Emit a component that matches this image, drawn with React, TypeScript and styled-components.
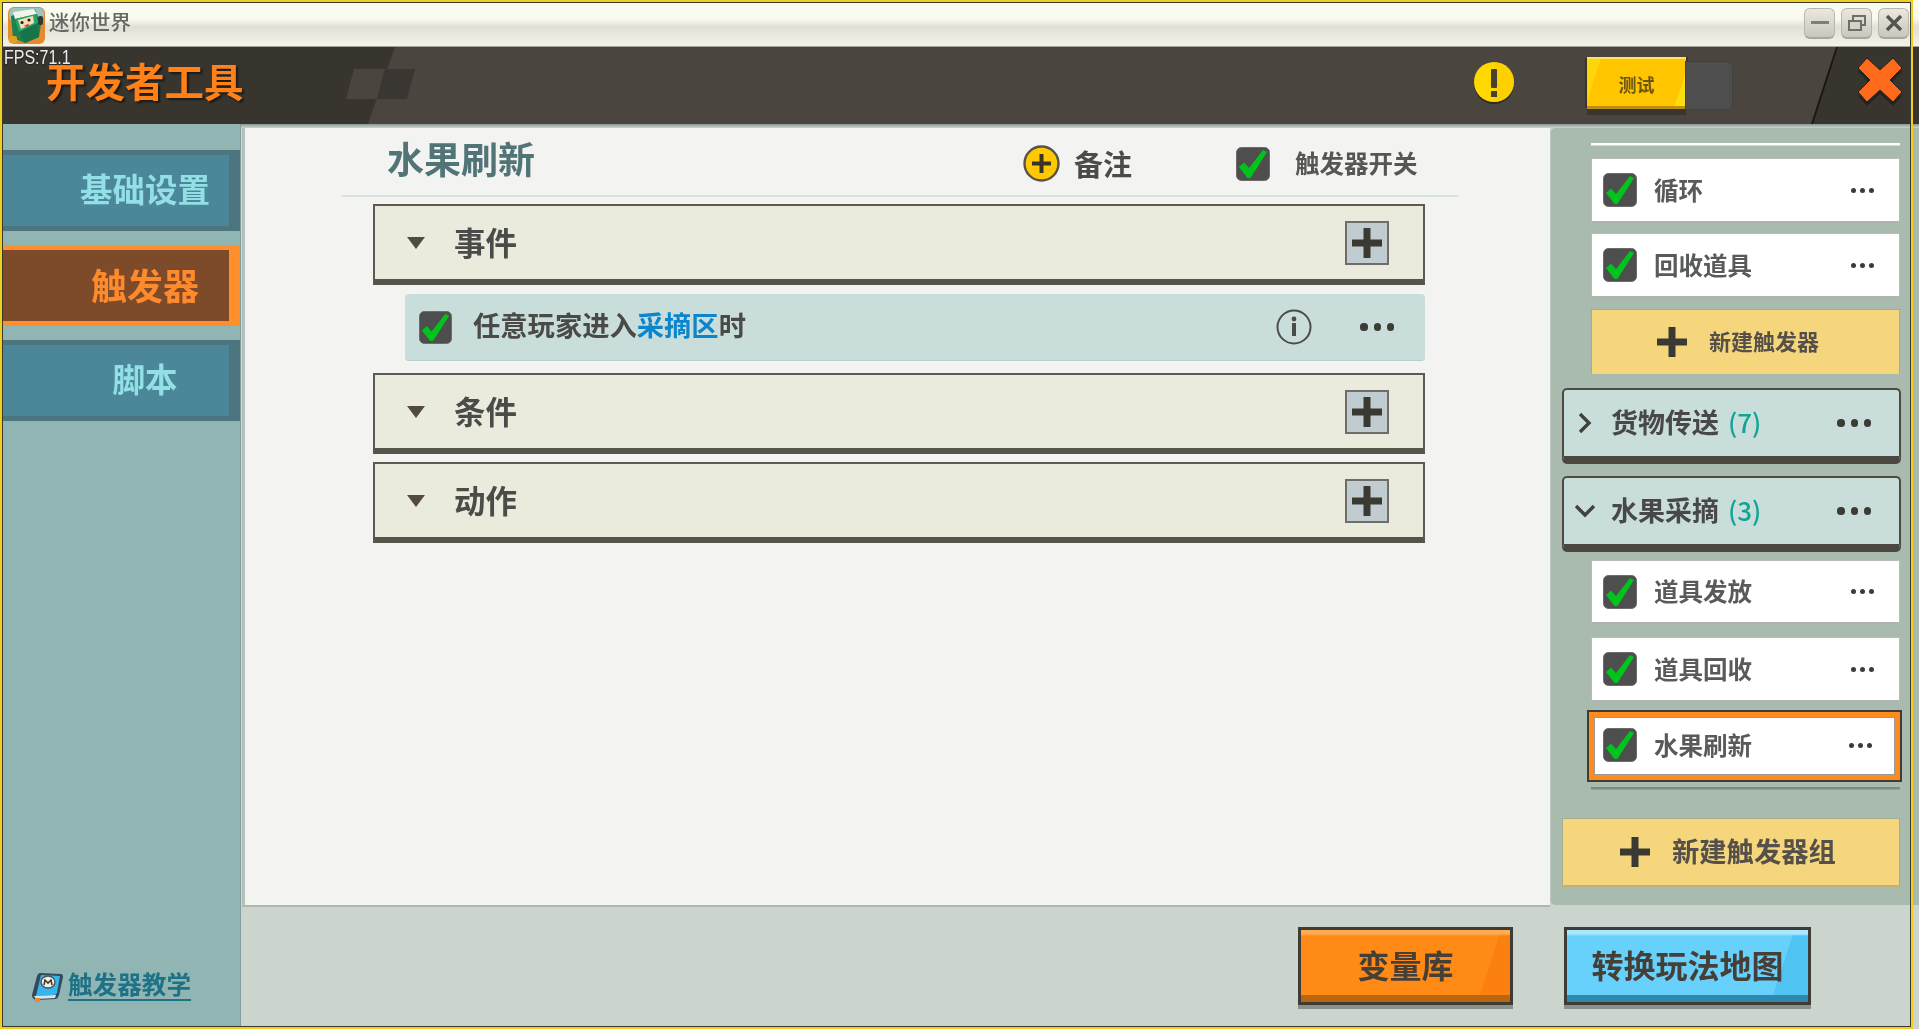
import React from "react";
import styled, { createGlobalStyle } from "styled-components";

const CJK = `"Noto Sans CJK SC", "Noto Sans", sans-serif`;

const Global = createGlobalStyle`
  html, body { margin: 0; padding: 0; background: #cbd5cd; }
  body { font-family: ${CJK}; overflow: hidden; }
  * { box-sizing: border-box; }
`;

const Screen = styled.div`
  position: relative;
  width: 1919px;
  height: 1029px;
  overflow: hidden;
  display: flex;
  flex-direction: column;
  background: #cbd5cd;
  filter: blur(0.4px);
`;

const WindowFrame = styled.div`
  position: absolute;
  left: 0;
  top: 0;
  width: 1913px;
  height: 1029px;
  border: solid #f0d01e;
  border-width: 3px 2px 3px 2px;
  outline: 1px solid #3c3a30;
  outline-offset: -3px;
  pointer-events: none;
  z-index: 5;
`;

const TitleBar = styled.div`
  height: 47px;
  flex: none;
  padding: 3px 10px 0 8px;
  display: flex;
  align-items: center;
  background: linear-gradient(180deg, #fbfcf0 0, #f9f9ed 19px, #e2dfd3 27px, #ebe9de 36px, #f4f3e8 46px, #55524a 47px);
`;

const TitleText = styled.span`
  margin: 0 0 7px 4px;
  font-size: 20.5px;
  line-height: 1;
  color: #666865;
  font-weight: 500;
`;

const WindowButtons = styled.div`
  margin-left: auto;
  display: flex;
  gap: 6px;
  margin-top: -4px;
`;

const WindowButton = styled.div`
  width: 31px;
  height: 31px;
  border-radius: 6px;
  border: 1px solid #b9b6aa;
  border-bottom: 2px solid #a9a69b;
  background: linear-gradient(180deg, #ebe9df, #c9c7bc);
  display: flex;
  align-items: center;
  justify-content: center;
`;

const Header = styled.div`
  position: relative;
  height: 77px;
  flex: none;
  display: flex;
  align-items: center;
  padding: 0 16px 5px 46px;
  background: #38352f;
  overflow: hidden;
  &::before {
    content: "";
    position: absolute;
    inset: 0;
    background: #4a463f;
    clip-path: polygon(395px 0, 1837px 0, 1812px 100%, 368px 100%);
  }
  &::after {
    content: "";
    position: absolute;
    inset: 0;
    background: #191814;
    clip-path: polygon(1836px 0, 1838px 0, 1813px 100%, 1811px 100%);
  }
`;

const Fps = styled.span`
  position: absolute;
  left: 4px;
  top: 0;
  z-index: 2;
  font-family: "Liberation Sans", sans-serif;
  font-size: 20px;
  line-height: 20px;
  color: #ececec;
  text-shadow: 0 1px 1px #222;
  transform: scaleX(0.8);
  transform-origin: left center;
`;

const HeaderTitle = styled.h1`
  position: relative;
  margin: 0 0 6px;
  font-size: 39.5px;
  line-height: 1;
  font-weight: 700;
  color: #ff8118;
  text-shadow: 2px 2px 2px #1c1a16;
`;

const Checker = styled.svg`
  position: absolute;
  left: 344px;
  top: 22px;
`;

const HeaderIcon = styled.svg`
  position: relative;
  flex: none;
  display: block;
`;

const WarnSlot = styled.div`
  position: relative;
  margin-left: auto;
`;

const TestGroup = styled.div`
  position: relative;
  display: flex;
  margin-left: 72px;
`;

const TestButton = styled.div`
  width: 99px;
  height: 52px;
  padding-top: 2px;
  display: flex;
  align-items: center;
  justify-content: center;
  font-size: 18px;
  font-weight: 700;
  color: #6d5610;
  border-top: 2px solid #ffe45a;
  border-bottom: 3px solid #c08d10;
  background: linear-gradient(108deg, #ffd60a 0, #ffd60a 12%, #ffc600 12%, #ffc600 90%, #ffdc10 90%);
  box-shadow: 0 6px 0 #38352f, -3px 0 0 -1px #38352f, 2px 0 0 0 #38352f;
`;

const ToggleTrack = styled.div`
  width: 46px;
  height: 47px;
  margin-top: 5px;
  background: #4e4e4e;
  border-radius: 0 5px 5px 0;
  box-shadow: 0 0 0 1px #42403a;
`;

const CloseSlot = styled.div`
  position: relative;
  margin-left: 125px;
`;

const Body = styled.div`
  flex: 1;
  min-height: 0;
  display: flex;
`;

const Sidebar = styled.nav`
  width: 241px;
  flex: none;
  padding: 26px 0 0 3px;
  display: flex;
  flex-direction: column;
  gap: 14px;
  background: #91b5b3;
  border-right: 1px solid #7fa09f;
`;

const Tab = styled.div<{ $active?: boolean }>`
  height: 81px;
  padding: 0 0 ${(p) => (p.$active ? 3 : 4)}px 58px;
  display: flex;
  align-items: center;
  justify-content: center;
  font-size: ${(p) => (p.$active ? 36 : 32.5)}px;
  line-height: 1;
  font-weight: 700;
  color: ${(p) => (p.$active ? "#ff8a2c" : "#92dfe6")};
  background: ${(p) => (p.$active ? "#7d4a2a" : "#4c8699")};
  border: solid ${(p) => (p.$active ? "#ff8f2d" : "#4d7580")};
  border-width: 5px 11px 5px 0;
`;

const HelpLink = styled.a`
  margin-top: auto;
  margin-bottom: 26px;
  margin-left: 28px;
  display: flex;
  align-items: flex-start;
  gap: 4px;
  font-size: 24.6px;
  font-weight: 700;
  line-height: 28px;
  color: #1e7287;
`;

const HelpText = styled.span`
  border-bottom: 2px solid #1e7287;
  margin-top: -3px;
  padding-bottom: 2px;
`;

const MainColumn = styled.div`
  flex: 1;
  min-width: 0;
  display: flex;
  flex-direction: column;
  padding-top: 4px;
  background: linear-gradient(180deg, #8b9893 0, #cbd5cd 4px);
`;

const Workspace = styled.div`
  display: flex;
  height: 778px;
  flex: none;
`;

const Editor = styled.section`
  width: 1308px;
  flex: none;
  height: 779px;
  padding: 0 92px 0 97px;
  background: #f3f3f1;
  border-left: 3px solid #b5c0b8;
  border-bottom: 2px solid #b2b5af;
  margin-left: 1px;
`;

const EditorHead = styled.header`
  height: 69px;
  padding: 4px 0 0 45px;
  display: flex;
  align-items: center;
  border-bottom: 2px solid #d4e4dc;
`;

const EditorTitle = styled.h2`
  margin: 0 0 11px;
  font-size: 37px;
  line-height: 1;
  font-weight: 700;
  color: #517477;
`;

const NoteAction = styled.div`
  margin-left: 488px;
  display: flex;
  align-items: center;
  gap: 14px;
  font-size: 29px;
  line-height: 1;
  font-weight: 700;
  color: #4b4b49;
`;

const SwitchAction = styled.div`
  margin-left: 104px;
  display: flex;
  align-items: center;
  gap: 25px;
  font-size: 24.5px;
  line-height: 1;
  font-weight: 700;
  color: #565654;
`;

const Sections = styled.div`
  margin: 7px 0 0 31px;
  width: 1052px;
  display: flex;
  flex-direction: column;
`;

const SectionRow = styled.div<{ $top?: number }>`
  height: 81px;
  margin-top: ${(p) => p.$top ?? 0}px;
  padding: 0 34px 0 32px;
  display: flex;
  align-items: center;
  background: #ebebdd;
  border: 2px solid #5e5a52;
  border-bottom: 6px solid #57544c;
  font-size: 31.5px;
  line-height: 1;
  font-weight: 700;
  color: #4b4b49;
`;

const SectionLabel = styled.span`
  margin-bottom: 2px;
`;

const Caret = styled.i`
  width: 0;
  height: 0;
  border-left: 9px solid transparent;
  border-right: 9px solid transparent;
  border-top: 12px solid #544b3f;
  margin-right: 29px;
  margin-top: 1px;
`;

const PlusBox = styled.div`
  margin-left: auto;
  width: 44px;
  height: 44px;
  display: flex;
  align-items: center;
  justify-content: center;
  background: #c1ccd0;
  border: 2px solid #6d6d6a;
`;

const EventRow = styled.div`
  margin: 9px 0 12px 32px;
  height: 67px;
  padding: 0 31px 0 14px;
  display: flex;
  align-items: center;
  background: #c9dedb;
  border-radius: 4px;
  border-bottom: 1px solid #b9cfcc;
`;

const EventText = styled.span`
  margin: 0 0 4px 21px;
  font-size: 27.3px;
  line-height: 1;
  font-weight: 700;
  color: #4a4a48;
`;

const Link = styled.span`
  color: #0b86cc;
`;

const InfoSlot = styled.div`
  margin-left: auto;
  margin-right: 48px;
  display: flex;
`;

const Dots = styled.div<{ $r: number; $gap: number }>`
  display: flex;
  gap: ${(p) => p.$gap}px;
  flex: none;
  & > i {
    width: ${(p) => p.$r * 2}px;
    height: ${(p) => p.$r * 2}px;
    border-radius: 50%;
    background: #3d3b36;
  }
`;

const RightPanel = styled.aside`
  flex: 1;
  height: 777px;
  padding: 15px 0 0 0;
  background: #a9bbaf;
  border-radius: 5px 0 0 5px;
  border-left: 1px solid #bdcac0;
  display: flex;
  flex-direction: column;
`;

const EdgeLine = styled.div<{ $top?: number; $shade?: boolean }>`
  margin: ${(p) => p.$top ?? 0}px 0 0 40px;
  width: 309px;
  height: 3px;
  background: ${(p) => (p.$shade ? "#7e8d84" : "#fff")};
  border-bottom: 1px solid ${(p) => (p.$shade ? "#93a298" : "#d5d8d3")};
`;

const Card = styled.div<{ $top: number; $h: number }>`
  margin: ${(p) => p.$top}px 0 0 40px;
  width: 309px;
  height: ${(p) => p.$h}px;
  padding: 0 25px 0 11px;
  display: flex;
  align-items: center;
  background: #fff;
  border: 1px solid #b9bdb8;
  border-bottom: 2px solid #b0b4af;
  font-size: 24.5px;
  line-height: 1;
  font-weight: 700;
  color: #595b5a;
`;

const SelectedCard = styled.div<{ $top: number }>`
  margin: ${(p) => p.$top}px 0 0 36px;
  width: 315px;
  height: 72px;
  padding: 0 28px 2px 14px;
  display: flex;
  align-items: center;
  background: #fff;
  border: 2px solid #3f3c36;
  box-shadow: inset 0 0 0 5px #ff8a1e, inset 0 0 0 6px #9a9a96;
  font-size: 24.5px;
  line-height: 1;
  font-weight: 700;
  color: #595b5a;
`;

const CardLabel = styled.span`
  margin-left: 17px;
  margin-right: auto;
`;

const AddButton = styled.div<{ $top: number; $x: number; $w: number; $h: number; $size: number; $gap: number; $flat?: boolean }>`
  margin: ${(p) => p.$top}px 0 0 ${(p) => p.$x}px;
  width: ${(p) => p.$w}px;
  height: ${(p) => p.$h}px;
  padding-left: ${(p) => (p.$flat ? 57 : 65)}px;
  display: flex;
  align-items: center;
  gap: ${(p) => p.$gap}px;
  background: #f5d67c;
  border: 1px solid #a3ad8f;
  border-bottom: ${(p) => (p.$flat ? "2px solid #c0b079" : "none")};
  font-size: ${(p) => p.$size}px;
  line-height: 1;
  font-weight: 700;
  color: #55504a;
`;

const AddLabel = styled.span<{ $lift: number }>`
  margin-bottom: ${(p) => p.$lift}px;
`;

const Group = styled.div<{ $top: number }>`
  margin: ${(p) => p.$top}px 0 0 11px;
  width: 339px;
  height: 76px;
  padding: 0 28px 0 13px;
  display: flex;
  align-items: center;
  background: #c9dedb;
  border: 2px solid #4e4b44;
  border-bottom: 8px solid #4a4740;
  border-radius: 5px;
  font-size: 27px;
  line-height: 1;
  font-weight: 700;
  color: #48484a;
`;

const GroupLabel = styled.span`
  margin: 0 auto 3px 18px;
`;

const Count = styled.span`
  font-weight: 500;
  font-size: 26px;
  margin-left: 9px;
  color: #12a595;
`;

const BottomBar = styled.div`
  flex: 1;
  display: flex;
  padding: 21px 0 0 1057px;
  gap: 51px;
`;

const BigButton = styled.div<{ $w: number; $base: string; $edge: string; $side: string; $hi: string }>`
  width: ${(p) => p.$w}px;
  height: 78px;
  padding-bottom: 4px;
  display: flex;
  align-items: center;
  justify-content: center;
  font-size: 32px;
  line-height: 1;
  font-weight: 700;
  color: #463f38;
  background:
    linear-gradient(180deg, ${(p) => p.$hi} 0, ${(p) => p.$hi} 4px, transparent 6px),
    linear-gradient(0deg, ${(p) => p.$edge} 0, ${(p) => p.$edge} 7px, transparent 7px),
    linear-gradient(108deg, ${(p) => p.$base} 86%, ${(p) => p.$side} 86%);
  border: 3px solid #3f3c36;
  box-shadow: 0 4px 0 #8b908a;
`;

const Check = ({ size = 34 }: { size?: number }) => (
  <svg width={size} height={size} viewBox="0 0 34 34" style={{ flex: "none", display: "block" }}>
    <rect x="0.5" y="0.5" width="33" height="33" rx="5" fill="#4e4e4e" stroke="#6b6b69" />
    <path d="M3 20 L8 15.5 L13 21 L27 3 L31 5 L14.5 31 L11.5 31 Z" fill="#00c41c" />
  </svg>
);

const Plus = ({ size = 30, thick = 7, color = "#3a3a32" }: { size?: number; thick?: number; color?: string }) => {
  const a = (size - thick) / 2;
  return (
    <svg width={size} height={size} viewBox={`0 0 ${size} ${size}`} style={{ flex: "none", display: "block" }}>
      <rect x={a} y="0" width={thick} height={size} fill={color} />
      <rect x="0" y={a} width={size} height={thick} fill={color} />
    </svg>
  );
};

const ThreeDots = ({ r = 2.5, gap = 4 }: { r?: number; gap?: number }) => (
  <Dots $r={r} $gap={gap}>
    <i />
    <i />
    <i />
  </Dots>
);

const GameIcon = () => (
  <svg width="37" height="37" viewBox="0 0 37 37" style={{ flex: "none", display: "block" }}>
    <rect width="37" height="37" rx="6" fill="#e58a2a" />
    <rect x="1" y="1" width="35" height="13" rx="5" fill="#9cc4c4" />
    <path d="M3 9 L27 2 L33 17 L31 30 L17 36 L5 31 Z" fill="#1f7f50" />
    <path d="M5 5 L26 2 L29 7 L7 12 Z" fill="#f2f2e6" />
    <path d="M7 12 L28 7 L30 16 L11 25 Z" fill="#27a866" />
    <path d="M10 13 L25 9 L26 16 L13 22 Z" fill="#f8dcb8" />
    <circle cx="14" cy="15.5" r="1.6" fill="#222" />
    <circle cx="21" cy="13" r="1.6" fill="#222" />
    <path d="M15.5 19 L21 16.5 L20 20 Z" fill="#d04030" />
    <path d="M11 25 L30 16 L31 30 L17 36 Z" fill="#17744a" />
    <rect x="30" y="9" width="5" height="9" rx="2" fill="#2c3a38" />
    <rect x="1" y="29" width="8" height="7" rx="2" fill="#e0a020" />
  </svg>
);

const BookIcon = () => (
  <svg width="33" height="31" viewBox="0 0 33 31" style={{ flex: "none", display: "block" }}>
    <path d="M9 1 L30 2 Q32 2 32 5 L28 23 Q27 26 25 27 L5 28 Q1 27 1 23 L6 4 Q7 1 9 1 Z" fill="#35495c" />
    <path d="M10 3 L29 4 L26 21 Q25 23 23 23 L5 24 Z" fill="#36b4ee" />
    <path d="M3 24 L25 23 L24 26 L5 27 Z" fill="#d7e6ee" />
    <ellipse cx="17" cy="10" rx="7" ry="6" fill="#f0f0ea" stroke="#54504a" strokeWidth="1.4" />
    <path d="M13 13 L14 8 L17 11 L20 8 L21 13" fill="none" stroke="#403c38" strokeWidth="1.6" />
    <rect x="4" y="26" width="5" height="4" fill="#f08a20" />
  </svg>
);

export default function App() {
  return (
    <Screen>
      <Global />
      <TitleBar>
        <GameIcon />
        <TitleText>迷你世界</TitleText>
        <WindowButtons>
          <WindowButton>
            <svg width="20" height="6" viewBox="0 0 20 6">
              <rect x="1" y="1" width="18" height="3" fill="#807e76" />
            </svg>
          </WindowButton>
          <WindowButton>
            <svg width="20" height="18" viewBox="0 0 20 18" fill="none" stroke="#6f6e68" strokeWidth="2">
              <rect x="6" y="2" width="12" height="9" />
              <rect x="2" y="7" width="12" height="9" fill="#d5d3c8" />
            </svg>
          </WindowButton>
          <WindowButton>
            <svg width="18" height="18" viewBox="0 0 18 18" stroke="#55544e" strokeWidth="3.4">
              <path d="M2 2 L16 16 M16 2 L2 16" />
            </svg>
          </WindowButton>
        </WindowButtons>
      </TitleBar>

      <Header>
        <Fps>FPS:71.1</Fps>
        <Checker width="72" height="31" viewBox="0 0 72 31">
          <path d="M10 0 H41 L33 30 H2 Z" fill="#4a463f" />
          <path d="M41 0 H71 L63 30 H33 Z" fill="#3a3732" />
        </Checker>
        <HeaderTitle>开发者工具</HeaderTitle>
        <WarnSlot>
          <HeaderIcon width="42" height="44" viewBox="0 0 42 44">
            <circle cx="21" cy="23" r="20" fill="#2e2c27" />
            <circle cx="21" cy="21" r="20" fill="#ffd800" />
            <path d="M21 1 A20 20 0 0 1 41 21 A20 20 0 0 1 21 41 Z" fill="#fbc800" opacity="0.5" />
            <rect x="18" y="8" width="6" height="19" rx="1" fill="#4a4030" />
            <rect x="18" y="30" width="6" height="6" fill="#4a4030" />
          </HeaderIcon>
        </WarnSlot>
        <TestGroup>
          <TestButton>测试</TestButton>
          <ToggleTrack />
        </TestGroup>
        <CloseSlot>
          <HeaderIcon width="46" height="56" viewBox="0 0 46 56">
            <path d="M10 4 L23 16 L36 4 L45 14 L33 26 L45 38 L36 48 L23 36 L10 48 L1 38 L13 26 L1 14 Z" fill="#26241f" transform="translate(0 3)" />
            <path d="M10 3 L23 15 L36 3 L45 13 L33 25 L45 37 L36 47 L23 35 L10 47 L1 37 L13 25 L1 13 Z" fill="#ff6a1c" stroke="#26241f" strokeWidth="1" />
          </HeaderIcon>
        </CloseSlot>
      </Header>

      <Body>
        <Sidebar>
          <Tab>基础设置</Tab>
          <Tab $active>触发器</Tab>
          <Tab>脚本</Tab>
          <HelpLink>
            <BookIcon />
            <HelpText>触发器教学</HelpText>
          </HelpLink>
        </Sidebar>

        <MainColumn>
          <Workspace>
            <Editor>
              <EditorHead>
                <EditorTitle>水果刷新</EditorTitle>
                <NoteAction>
                  <svg width="37" height="37" viewBox="0 0 37 37">
                    <circle cx="18.5" cy="18.5" r="17" fill="#ffc800" stroke="#55534c" strokeWidth="2.4" />
                    <rect x="16.5" y="9" width="4" height="19" fill="#3a3426" />
                    <rect x="9" y="16.5" width="19" height="4" fill="#3a3426" />
                  </svg>
                  备注
                </NoteAction>
                <SwitchAction>
                  <Check />
                  触发器开关
                </SwitchAction>
              </EditorHead>
              <Sections>
                <SectionRow>
                  <Caret />
                  <SectionLabel>事件</SectionLabel>
                  <PlusBox>
                    <Plus />
                  </PlusBox>
                </SectionRow>
                <EventRow>
                  <Check size={33} />
                  <EventText>
                    任意玩家进入<Link>采摘区</Link>时
                  </EventText>
                  <InfoSlot>
                    <svg width="36" height="36" viewBox="0 0 36 36">
                      <circle cx="18" cy="18" r="16.5" fill="none" stroke="#4a4c48" strokeWidth="2" />
                      <circle cx="18" cy="10" r="2.4" fill="#4a4c48" />
                      <rect x="16" y="14" width="4" height="13" fill="#4a4c48" />
                    </svg>
                  </InfoSlot>
                  <ThreeDots r={3.6} gap={6} />
                </EventRow>
                <SectionRow>
                  <Caret />
                  <SectionLabel>条件</SectionLabel>
                  <PlusBox>
                    <Plus />
                  </PlusBox>
                </SectionRow>
                <SectionRow $top={8}>
                  <Caret />
                  <SectionLabel>动作</SectionLabel>
                  <PlusBox>
                    <Plus />
                  </PlusBox>
                </SectionRow>
              </Sections>
            </Editor>

            <RightPanel>
              <EdgeLine />
              <Card $top={12} $h={65}>
                <Check />
                <CardLabel>循环</CardLabel>
                <ThreeDots />
              </Card>
              <Card $top={10} $h={65}>
                <Check />
                <CardLabel>回收道具</CardLabel>
                <ThreeDots />
              </Card>
              <AddButton $top={11} $x={40} $w={309} $h={65} $size={22} $gap={22}>
                <Plus />
                <AddLabel $lift={4}>新建触发器</AddLabel>
              </AddButton>
              <Group $top={14}>
                <svg width="16" height="24" viewBox="0 0 16 24" fill="none" stroke="#42423c" strokeWidth="3.4">
                  <path d="M3 3 L12 12 L3 21" />
                </svg>
                <GroupLabel>
                  货物传送<Count>(7)</Count>
                </GroupLabel>
                <ThreeDots r={3.6} gap={6} />
              </Group>
              <Group $top={12}>
                <svg width="22" height="14" viewBox="0 0 22 14" fill="none" stroke="#42423c" strokeWidth="3.4" style={{ marginLeft: -3, marginRight: -3 }}>
                  <path d="M2 2 L11 11 L20 2" />
                </svg>
                <GroupLabel>
                  水果采摘<Count>(3)</Count>
                </GroupLabel>
                <ThreeDots r={3.6} gap={6} />
              </Group>
              <Card $top={8} $h={64}>
                <Check />
                <CardLabel>道具发放</CardLabel>
                <ThreeDots />
              </Card>
              <Card $top={13} $h={65}>
                <Check />
                <CardLabel>道具回收</CardLabel>
                <ThreeDots />
              </Card>
              <SelectedCard $top={8}>
                <Check />
                <CardLabel>水果刷新</CardLabel>
                <ThreeDots />
              </SelectedCard>
              <EdgeLine $top={5} $shade />
              <AddButton $top={28} $x={11} $w={338} $h={69} $size={27.3} $gap={22} $flat>
                <Plus />
                <AddLabel $lift={2}>新建触发器组</AddLabel>
              </AddButton>
            </RightPanel>
          </Workspace>

          <BottomBar>
            <BigButton $w={215} $base="#ff8a15" $edge="#b8660f" $side="#fb800f" $hi="#ffab52">
              变量库
            </BigButton>
            <BigButton $w={247} $base="#67d1fc" $edge="#2f88ad" $side="#4fc3f2" $hi="#a9e8ff">
              转换玩法地图
            </BigButton>
          </BottomBar>
        </MainColumn>
      </Body>

      <WindowFrame />
    </Screen>
  );
}
